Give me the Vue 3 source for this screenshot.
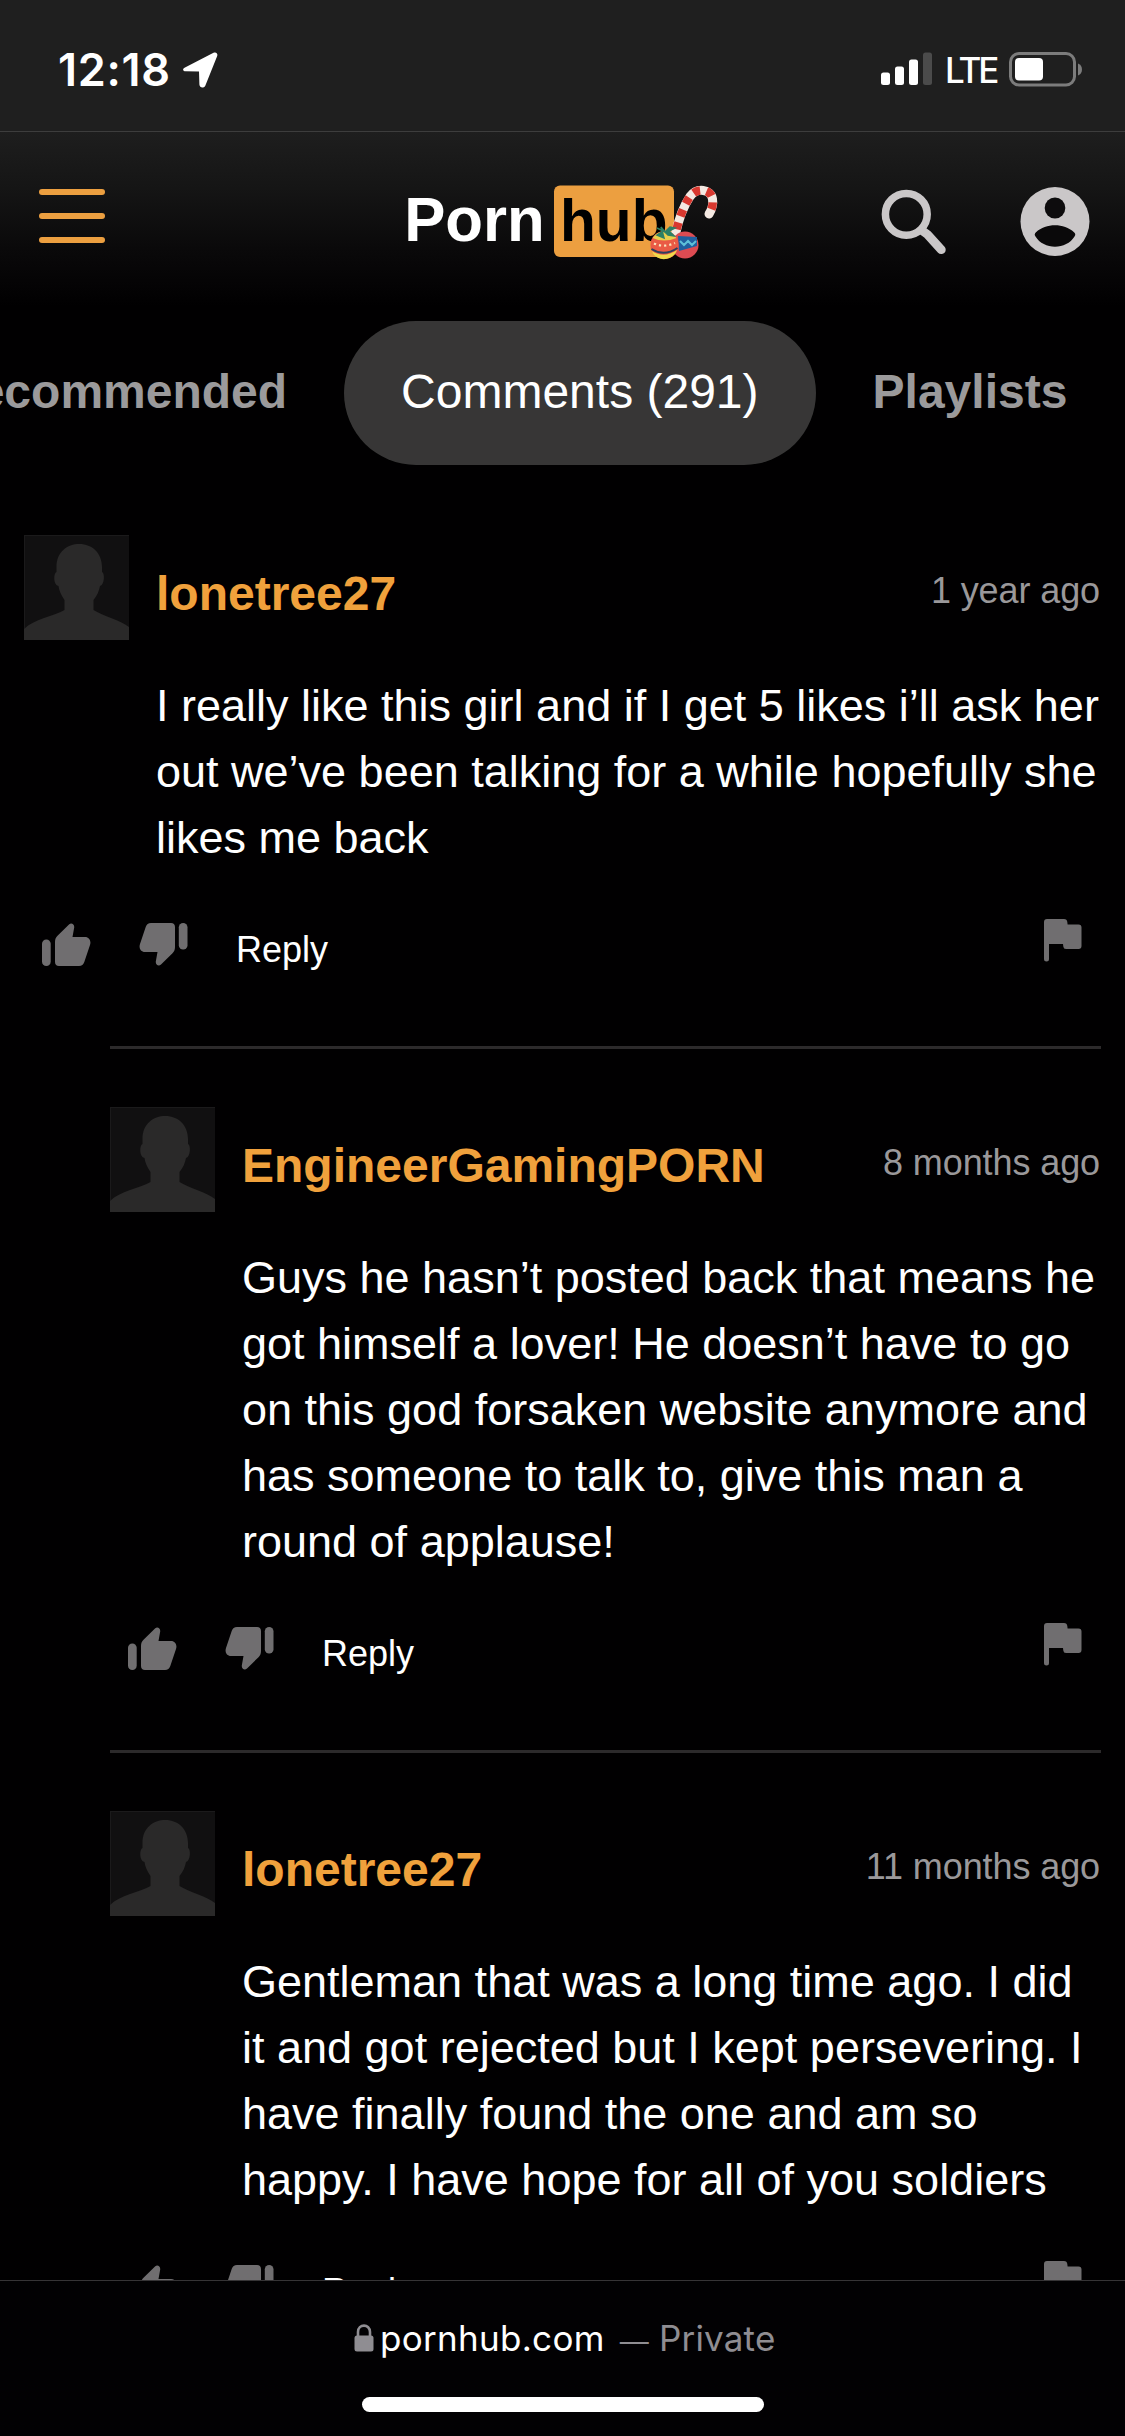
<script setup>
const tabs = [
  { label: 'Recommended', active: false },
  { label: 'Comments (291)', active: true },
  { label: 'Playlists', active: false },
]

const comments = [
  {
    user: 'lonetree27',
    time: '1 year ago',
    nested: false,
    lines: [
      'I really like this girl and if I get 5 likes i’ll ask her',
      'out we’ve been talking for a while hopefully she',
      'likes me back',
    ],
  },
  {
    user: 'EngineerGamingPORN',
    time: '8 months ago',
    nested: true,
    lines: [
      'Guys he hasn’t posted back that means he',
      'got himself a lover! He doesn’t have to go',
      'on this god forsaken website anymore and',
      'has someone to talk to, give this man a',
      'round of applause!',
    ],
  },
  {
    user: 'lonetree27',
    time: '11 months ago',
    nested: true,
    lines: [
      'Gentleman that was a long time ago. I did',
      'it and got rejected but I kept persevering. I',
      'have finally found the one and am so',
      'happy. I have hope for all of you soldiers',
    ],
  },
]

const thumb =
  'M13 19C13 16 14 14.3 15.5 12.8L27 1.5C29.2-.6 32.6 1 32.2 4.5L30.5 14H43C47.3 14 49.4 18 48 22L42.3 39C41.3 41.7 39.8 43 37 43H17C14.5 43 13 41.5 13 39Z'
</script>

<template>
  <div class="screen">
    <div class="status">
      <div class="clock">
        <span class="time">12:18</span>
        <svg width="35" height="36" viewBox="0 0 35 36">
          <path d="M2 15.5 30.5.8C33-.4 35 1.3 34.2 4L22.4 33.4C21.2 36.4 16.6 36.2 16.4 32.6L16 19.6 2.6 19.3C-.6 19.1-.6 16.7 2 15.5Z" fill="#fff" />
        </svg>
      </div>
      <div class="indicators">
        <svg width="52" height="33" viewBox="0 0 52 33">
          <rect x="0" y="20.5" width="9" height="12.5" rx="2.5" fill="#fff" />
          <rect x="14" y="14.5" width="9" height="18.5" rx="2.5" fill="#fff" />
          <rect x="28" y="7.5" width="9" height="25.5" rx="2.5" fill="#fff" />
          <rect x="42" y="0.5" width="9" height="32.5" rx="2.5" fill="#4b4b4b" />
        </svg>
        <span class="lte">LTE</span>
        <svg class="battery" width="74" height="35" viewBox="0 0 74 35">
          <rect x="1.5" y="1.5" width="64" height="31.5" rx="8.5" fill="none" stroke="#7c7c7c" stroke-width="3" />
          <rect x="6" y="6" width="28" height="22.5" rx="4" fill="#fff" />
          <path d="M69 11.5C74.3 13 74.3 22 69 23.5Z" fill="#7c7c7c" />
        </svg>
      </div>
    </div>

    <header class="topbar">
      <div class="menu"><i></i><i></i><i></i></div>
      <svg class="logo" width="320" height="80" viewBox="0 0 320 80">
        <text x="4.2" y="60.5" class="word" font-size="62.5" fill="#fff" textLength="140.5" lengthAdjust="spacingAndGlyphs">Porn</text>
        <rect x="154" y="5.5" width="120" height="71.5" rx="6" fill="#ec9f40" />
        <text x="160" y="60.5" class="word" font-size="59.5" fill="#000" textLength="107.5" lengthAdjust="spacingAndGlyphs">hub</text>
        <path d="M275.500 54C278 42 283 27 290 16.500C297 7 311 9 312.500 19C313.500 25 311.500 30 309 34" fill="none" stroke="#f4e9e2" stroke-width="9" stroke-linecap="round" />
        <path d="M275.500 54C278 42 283 27 290 16.500C297 7 311 9 312.500 19C313.500 25 311.500 30 309 34" fill="none" stroke="#d8382f" stroke-width="8.500" stroke-dasharray="7 6.500" stroke-dashoffset="-5" />
        <circle cx="285" cy="65" r="13.500" fill="#dd4b52" />
        <path d="M278 56 297 57 297 66 279 71Z" fill="#205f9f" />
        <path d="M280 61l4 4 4-4 4 4 4-4" fill="none" stroke="#5ec0d8" stroke-width="2" />
        <circle cx="264.500" cy="65" r="14" fill="#ea5a45" />
        <path d="M252.500 58C259 49 269 49 276.500 58Q264 63 252.500 58Z" fill="#e9cf4c" />
        <path d="M252 71Q264 79 277 70C273 82 255 82 252 71Z" fill="#efd94b" />
        <path d="M251.500 69Q264 77 277.500 68" fill="none" stroke="#2d3f5e" stroke-width="2" />
        <path d="M254 63.500Q264 68 275 63" fill="none" stroke="#fbe6bd" stroke-width="2.200" stroke-dasharray="2.200 3" />
        <path d="M265 52 261 47 264 58 257 55 263 51 257 48ZM265 52 270 47 275 48 269 51 274 56 268 55Z" fill="#2d8065" stroke="#2d8065" stroke-width="1.500" />
      </svg>
      <div class="actions">
        <svg width="66" height="72" viewBox="0 0 66 72">
          <circle cx="25.300" cy="27.300" r="20.900" fill="none" stroke="#cac7c8" stroke-width="7.500" />
          <path d="M41 43.500 46.500 47.500 60.300 62.700" fill="none" stroke="#cac7c8" stroke-width="8.800" stroke-linecap="round" stroke-linejoin="round" />
        </svg>
        <svg width="70" height="72" viewBox="0 0 70 72">
          <circle cx="35" cy="34.500" r="34.500" fill="#cac7c8" />
          <ellipse cx="35" cy="21" rx="10.300" ry="10.600" fill="#0d0c0d" />
          <path d="M15.500 49.500C14.300 48 14.500 46.500 16 45.300C26 36 44 36 54 45.300C55.500 46.500 55.700 48 54.500 49.500C46.500 63 23.500 63 15.500 49.500Z" fill="#0a090a" />
        </svg>
      </div>
    </header>

    <nav class="tabs">
      <span v-for="t in tabs" :key="t.label" class="tab" :class="{ active: t.active }">{{ t.label }}</span>
    </nav>

    <main class="comments">
      <article v-for="(c, i) in comments" :key="i" class="comment" :class="{ nested: c.nested }">
        <div class="head">
          <svg class="avatar" width="105" height="105" viewBox="0 0 105 105">
            <rect width="105" height="105" fill="#111011" />
            <path d="M0 .5H105M.5 0V105" stroke="#1b1a1b" />
            <path d="M0 105V94C5 89 12 86 20 83C28 80 36 78 40.500 75V65C37 60 35 55 34.500 51C29 50 29.500 38 32.500 37V32C32.500 17 43 9 55.500 9C68 9 78 18 78 32V37C81 38 80.500 50 76 51C75 56 73 61 69.500 65V75C74 78 80 80 87 83C95 86 101 89 105 92V105Z" fill="#2a2929" />
          </svg>
          <span class="user">{{ c.user }}</span>
          <span class="ago">{{ c.time }}</span>
        </div>
        <div class="text">
          <div v-for="l in c.lines" :key="l">{{ l }}</div>
        </div>
        <div class="bar">
          <svg class="up" width="49" height="43" viewBox="0 0 49 43">
            <rect x="0" y="16.500" width="8.700" height="26.500" rx="4.300" fill="#706e70" />
            <path :d="thumb" fill="#706e70" />
          </svg>
          <svg class="down" width="49" height="43" viewBox="0 0 49 43">
            <g transform="rotate(180 24.500 21.500)">
              <rect x="0.500" y="16.500" width="8.700" height="26.500" rx="4.300" fill="#706e70" />
              <path :d="thumb" fill="#706e70" />
            </g>
          </svg>
          <span class="reply">Reply</span>
          <svg class="flag" width="38" height="43" viewBox="0 0 38 43">
            <path d="M3 0H20Q23 0 23.300 3L23.600 5.500H34.500Q37.500 5.500 37.500 8.500V27Q37.500 30 34.500 30H22Q19.500 30 19.300 27.500L19 25H5V40Q5 42.500 2.500 42.500Q0 42.500 0 40V3Q0 0 3 0Z" fill="#706e70" />
          </svg>
        </div>
      </article>
    </main>

    <footer class="address">
      <div class="url">
        <svg width="20" height="28" viewBox="0 0 20 28">
          <path d="M4 13V8C4 -.500 16 -.500 16 8V13" fill="none" stroke="#8f8d92" stroke-width="2.600" />
          <rect x="0.500" y="11.500" width="19" height="16" rx="2.500" fill="#8f8d92" />
        </svg>
        <span class="domain">pornhub.com</span>
        <span class="private"><span class="dash">—</span> Private</span>
      </div>
      <div class="home"></div>
    </footer>
  </div>
</template>

<style>
body {
  margin: 0;
  background: #010001;
}
</style>

<style scoped>
.screen {
  display: flex;
  flex-direction: column;
  width: 1125px;
  height: 2436px;
  overflow: hidden;
  background: #010001;
  color: #fff;
  font-family: "Liberation Sans", Arial, sans-serif;
  white-space: nowrap;
}
svg {
  display: block;
  flex: none;
}
.status {
  flex: none;
  box-sizing: border-box;
  height: 132px;
  padding: 52px 42px 0 58px;
  display: flex;
  justify-content: space-between;
  background: #1f1f1f;
  border-bottom: 1px solid #3d3d3d;
  font-family: Inter, sans-serif;
}
.clock,
.indicators {
  display: flex;
  align-items: flex-start;
}
.time {
  width: 125px;
  font-size: 45px;
  line-height: 35px;
  font-weight: 600;
  letter-spacing: 0.7px;
}
.lte {
  width: 64px;
  margin-left: 12px;
  font-size: 35px;
  line-height: 37px;
  font-weight: 500;
  letter-spacing: -3px;
}
.topbar {
  flex: none;
  box-sizing: border-box;
  height: 189px;
  padding: 0 35px 0 39px;
  display: flex;
  background: linear-gradient(#1e1e1e, #151515 30%, #0a090a 62%, #010001 92%);
}
.menu {
  display: flex;
  flex-direction: column;
  gap: 18px;
  width: 66px;
  padding-top: 57px;
}
.menu i {
  height: 6px;
  border-radius: 3px;
  background: #ec9f40;
}
.logo {
  margin: 48px 0 0 295px;
}
.word {
  font-family: "Liberation Sans", Arial, sans-serif;
  font-weight: 700;
}
.actions {
  display: flex;
  gap: 73px;
  margin-left: auto;
  padding-top: 55px;
}
.tabs {
  flex: none;
  display: flex;
  height: 144px;
  margin-left: -114px;
}
.tab {
  padding: 0 57px;
  font-size: 48px;
  line-height: 142px;
  font-weight: 700;
  color: #9b9a9b;
}
.tab.active {
  border-radius: 72px;
  font-weight: 400;
  color: #fff;
  background: #373636;
}
.comments {
  flex: 1;
  min-height: 0;
  overflow: hidden;
  padding: 70px 24px 0;
}
.comment {
  height: 511px;
}
.nested {
  height: auto;
  margin-left: 86px;
  padding: 58px 0 81px;
  border-top: 3px solid #2c2a2b;
}
.head {
  display: flex;
  align-items: flex-start;
  height: 105px;
}
.user {
  margin: 34px 0 0 27px;
  font-size: 48px;
  line-height: 50px;
  font-weight: 700;
  color: #f0a13c;
}
.ago {
  margin: 36px 1px 0 auto;
  font-size: 36px;
  line-height: 40px;
  letter-spacing: -0.1px;
  color: #9a989a;
}
.text {
  margin: 33px 0 0 132px;
  font-size: 45px;
  line-height: 66px;
}
.bar {
  display: flex;
  align-items: flex-start;
  height: 46px;
  margin-top: 48px;
}
.up {
  margin: 4px 0 0 18px;
}
.down {
  margin: 4px 0 0 48px;
}
.reply {
  margin: 11px 0 0 48px;
  font-size: 36px;
  line-height: 40px;
}
.flag {
  margin-left: auto;
  margin-right: 19px;
}
.address {
  flex: none;
  box-sizing: border-box;
  height: 156px;
  border-top: 1px solid #363436;
  display: flex;
  flex-direction: column;
  background: #020103;
  font-family: Inter, sans-serif;
}
.url {
  display: flex;
  align-items: flex-start;
  height: 73px;
  padding: 43px 0 0 354px;
  font-size: 35px;
  line-height: 29px;
}
.domain {
  margin-left: 6px;
  letter-spacing: 0.3px;
}
.private {
  margin-left: 15px;
  letter-spacing: 0.2px;
  color: #8f8d92;
}
.dash {
  font-family: "Liberation Sans", Arial, sans-serif;
  font-size: 29px;
}
.home {
  width: 402px;
  height: 15px;
  margin-left: 362px;
  border-radius: 8px;
  background: #fff;
}
</style>
